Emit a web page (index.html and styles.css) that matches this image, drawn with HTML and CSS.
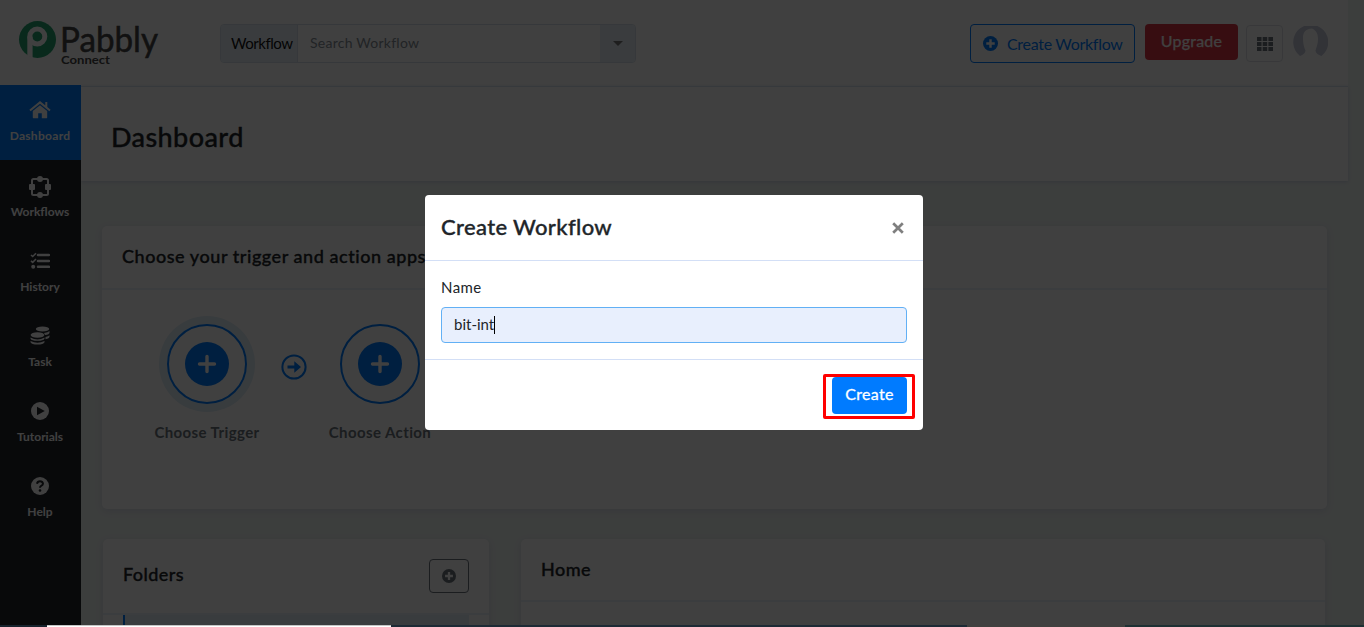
FILE: index.html
```html
<!DOCTYPE html>
<html lang="en">
<head>
<meta charset="utf-8">
<title>Pabbly Connect - Dashboard</title>
<link rel="stylesheet" href="styles.css">
</head>
<body>
<div class="app">
  <header class="topbar">
    <svg class="logo" width="150" height="56" viewBox="0 0 150 56">
      <circle cx="18.500" cy="18.500" r="18.500" fill="#24a46f"/>
      <circle cx="18.300" cy="15.500" r="7.500" fill="none" stroke="#fff" stroke-width="5"/>
      <path d="M8.300 15.500h5.300v21.200l-5.300-2z" fill="#fff"/>
      <text x="41" y="31" class="logo-name" textLength="98" lengthAdjust="spacingAndGlyphs">Pabbly</text>
      <text x="42" y="43" class="logo-sub" textLength="49" lengthAdjust="spacingAndGlyphs">Connect</text>
    </svg>
    <div class="search">
      <span class="search-scope">Workflow</span>
      <span class="search-input">Search Workflow</span>
      <span class="search-toggle"><i class="caret"></i></span>
    </div>
    <div class="actions">
      <button class="btn-create"><svg width="15" height="15" viewBox="0 0 16 16"><circle cx="8" cy="8" r="8" fill="#007bff"/><path d="M8 3.500v9M3.500 8h9" stroke="#fff" stroke-width="2.600"/></svg><span>Create Workflow</span></button>
      <button class="btn-upgrade">Upgrade</button>
      <button class="btn-grid"><svg width="16" height="14" viewBox="0 0 16 14" fill="#6c757d"><path d="M0 0h4.500v4H0zM5.700 0h4.500v4H5.700zM11.400 0H16v4h-4.600zM0 5h4.500v4H0zM5.700 5h4.500v4H5.700zM11.400 5H16v4h-4.600zM0 10h4.500v4H0zM5.700 10h4.500v4H5.700zM11.400 10H16v4h-4.600z"/></svg></button>
      <svg class="avatar" width="35" height="35" viewBox="0 0 35 35"><path d="M7 30A17.500 17.500 0 1 1 28.500 30C25 29 22.500 27 22.500 24.500C23.500 21 25 18 25 13C25 6 22 4 19 2.500C13 3 10 6 10 11C10 18 11 21 12.500 24.500C12.500 27 10 29 7 30Z" fill="#c5c9dc"/></svg>
    </div>
  </header>
  <div class="body">
    <nav class="sidebar">
      <a class="nav-item active"><svg width="22" height="18" viewBox="0 0 22 18"><path d="M11 4.200 3.800 10v6.600q0 .6.600.6h4.800v-5h3.600v5h4.800q.6 0 .6-.6V10z" fill="#fff"/><path d="M1 9.600 11 1.400 21 9.600M17.300 1v5" fill="none" stroke="#fff" stroke-width="2"/></svg><span>Dashboard</span></a>
      <a class="nav-item workflows"><svg width="22" height="22" viewBox="0 0 22 22"><rect x="3" y="3" width="16" height="16" rx="1.500" fill="none" stroke="#fff" stroke-width="2"/><g fill="#fff"><circle cx="11" cy="3" r="3"/><circle cx="11" cy="19" r="3"/><rect x="0" y="8" width="6" height="6" rx="1"/><rect x="16" y="8" width="6" height="6" rx="1"/></g></svg><span>Workflows</span></a>
      <a class="nav-item"><svg width="20" height="18" viewBox="0 0 20 18"><path d="M8 3h11M8 9h11M8 14.800h11" stroke="#fff" stroke-width="2.500" stroke-linecap="round"/><path d="m1 3 1.700 1.500L6 1.200M1 8.800l1.700 1.500L6 7" fill="none" stroke="#fff" stroke-width="1.600"/><circle cx="3.200" cy="14.800" r="2" fill="#fff"/></svg><span>History</span></a>
      <a class="nav-item"><svg width="20" height="19" viewBox="0 0 20 19" fill="#fff"><ellipse cx="12.500" cy="3" rx="6.700" ry="2.600"/><path d="M14 7q4-.5 5.500-2v1.500q0 2-4.500 2.500zM15.500 11q3-.5 4-1.800v1.600q0 1.700-4 2.400z"/><ellipse cx="7.500" cy="9" rx="6.900" ry="2.800"/><path d="M.5 11.500q7 3.800 14 0v1.200q-1 2-7 2t-7-2zM.5 15q7 3.600 14 0v1.200q-1 2.300-7 2.300t-7-2.300z"/></svg><span>Task</span></a>
      <a class="nav-item"><svg width="18" height="18" viewBox="0 0 18 18"><circle cx="9" cy="9" r="9" fill="#fff"/><path d="M6 4.700 13.800 9 6 13.300z" fill="#20242b"/></svg><span>Tutorials</span></a>
      <a class="nav-item"><svg width="18" height="18" viewBox="0 0 18 18"><circle cx="9" cy="9" r="9" fill="#fff"/><path d="M6 6.700Q6.500 4.300 9 4.300T12 6.600Q12 8 10.500 8.700T9 10.800" fill="none" stroke="#20242b" stroke-width="2"/><circle cx="9" cy="13.500" r="1.300" fill="#20242b"/></svg><span>Help</span></a>
    </nav>
    <div class="content">
      <div class="page-head"><h1>Dashboard</h1></div>
      <main class="main">
        <section class="card chooser">
          <h2 class="chooser-title">Choose your trigger and action apps</h2>
          <div class="steps">
            <div class="step"><div class="ring selected"><svg width="44" height="44" viewBox="0 0 44 44"><circle cx="22" cy="22" r="22" fill="#007bff"/><path d="M22 14.500v15M14.500 22h15" stroke="#fff" stroke-width="3.400" stroke-linecap="round"/></svg></div><span>Choose Trigger</span></div>
            <svg class="arrow" width="26" height="26" viewBox="0 0 26 26"><circle cx="13" cy="13" r="11.600" fill="none" stroke="#007bff" stroke-width="2"/><path d="M6.500 11.500h6.800V7.300L20 13l-6.700 5.700v-4.200H6.500z" fill="#007bff"/></svg>
            <div class="step"><div class="ring"><svg width="44" height="44" viewBox="0 0 44 44"><circle cx="22" cy="22" r="22" fill="#007bff"/><path d="M22 14.500v15M14.500 22h15" stroke="#fff" stroke-width="3.400" stroke-linecap="round"/></svg></div><span>Choose Action</span></div>
          </div>
        </section>
        <div class="columns">
          <section class="card folders">
            <div class="folders-head"><h2>Folders</h2><button class="btn-add"><svg width="14" height="14" viewBox="0 0 16 16"><circle cx="8" cy="8" r="8" fill="#6c757d"/><path d="M8 3.500v9M3.500 8h9" stroke="#fff" stroke-width="2.600"/></svg></button></div>
            <div class="folder-row"></div>
          </section>
          <section class="card home"><h2>Home</h2></section>
        </div>
      </main>
    </div>
  </div>
</div>
<div class="overlay">
  <div class="modal">
    <div class="modal-head"><h3>Create Workflow</h3><svg width="12" height="12" viewBox="0 0 12 12"><path d="m1.200 1.200 9.600 9.600M10.800 1.200 1.200 10.800" stroke="#7f7f7f" stroke-width="2.700"/></svg></div>
    <div class="modal-body"><label>Name</label><div class="field"><span>bit-int</span><i class="cursor"></i></div></div>
    <div class="modal-foot"><button class="btn-submit">Create</button><div class="highlight"></div></div>
  </div>
</div>
<div class="bottom-strip"><i class="s1"></i><i class="s2"></i><i class="s3"></i><i class="s4"></i><i class="s5"></i></div>
</body>
</html>
```

FILE: styles.css
```css
* { box-sizing: border-box; }
body { margin: 0; background: #f0f6f3; font-family: Lato, "Open Sans", sans-serif; color: #212529; overflow: hidden; }
h1, h2, h3 { margin: 0; font-weight: 500; -webkit-text-stroke: .35px currentColor; }
button { font-family: inherit; margin: 0; padding: 0; }
svg { display: block; flex: none; }
.app { width: 1364px; height: 627px; overflow: hidden; }
.topbar { width: 1348px; height: 85px; background: #fff; display: flex; align-items: flex-start; padding-left: 19px; }
.logo { margin-top: 21px; overflow: visible; }
.logo-name { font-size: 34px; fill: #444; stroke: #444; stroke-width: .5px; }
.logo-sub { font-size: 12px; font-weight: 700; fill: #444; }
.search { display: flex; margin: 24px 0 0 51px; width: 416px; height: 39px; border: 1px solid #d5e0ea; border-radius: 4px; font-size: 15px; line-height: 36px; overflow: hidden; }
.search-scope { flex: none; width: 77px; padding-left: 10px; background: #e6f0f8; border-right: 1px solid #d5e0ea; color: #111; letter-spacing: -.45px; white-space: nowrap; }
.search-input { flex: 1; padding: 0 0 0 12px; color: #868e96; font-size: 14px; letter-spacing: .25px; }
.search-toggle { width: 35px; background: #e6f0f8; display: flex; justify-content: center; }
.caret { width: 0; height: 0; margin-top: 16px; border: 5px solid transparent; border-top-color: #777; border-bottom: 0; }
.actions { display: flex; margin-left: 334px; align-items: flex-start; }
.btn-create { margin-top: 24px; width: 165px; height: 39px; border: 1px solid #007bff; border-radius: 4px; background: #fff; color: #007bff; font-size: 16px; letter-spacing: -.3px; display: flex; align-items: center; gap: 9px; padding-left: 12px; white-space: nowrap; }
.btn-upgrade { margin: 24px 0 0 10px; width: 93px; height: 36px; border: 0; border-radius: 4px; background: #dc3545; color: #fff; font-size: 16px; letter-spacing: .2px; padding-bottom: 3px; -webkit-text-stroke: .25px #fff; }
.btn-grid { margin: 25px 0 0 8px; width: 37px; height: 37px; border: 1px solid #dde0e6; border-radius: 4px; background: #fff; display: flex; align-items: center; justify-content: center; }
.avatar { margin: 26px 0 0 10px; }
.body { display: flex; height: 542px; }
.sidebar { width: 81px; background: #20242b; position: relative; }
.nav-item { height: 75px; display: flex; flex-direction: column; align-items: center; justify-content: flex-end; padding: 0 1px 15px 0; color: #fff; font-size: 12px; line-height: 16px; font-weight: 700; gap: 9px; }
.nav-item.active { background: #007bff; padding-bottom: 16px; letter-spacing: .3px; }
.nav-item.workflows { gap: 6px; }
.content { flex: 1; background: linear-gradient(#fff, #fff) 0 0 / 1267px 2px no-repeat; }
.page-head { width: 1267px; height: 95px; background: #fff; margin-top: 1px; border-top: 1px solid #d5e3ef; padding: 33px 0 0 30px; box-shadow: 0 1px 4px #cbd3e4; }
.page-head h1 { font-size: 27px; line-height: 34px; letter-spacing: .4px; }
.main { padding: 45px 0 0 21px; }
.card { background: #fff; border-radius: 5px; box-shadow: 0 2px 9px #d8dbe7; }
.chooser { width: 1225px; height: 283px; }
.chooser-title { height: 64px; padding: 19px 0 0 20px; border-bottom: 2px solid #eaf1f9; font-size: 18px; line-height: 22px; letter-spacing: .55px; }
.steps { display: flex; padding: 34px 0 0 45px; }
.step { width: 120px; display: flex; flex-direction: column; align-items: center; color: #6c757d; font-size: 15px; font-weight: 700; line-height: 20px; white-space: nowrap; gap: 18px; letter-spacing: .4px; }
.ring { width: 80px; height: 80px; border: 2px solid #007bff; border-radius: 50%; display: grid; place-items: center; }
.ring.selected { box-shadow: 0 0 0 8px #dfedf7; }
.arrow { margin: 30px 13px 0 14px; }
.columns { display: flex; gap: 32px; padding: 30px 0 0 1px; }
.folders { width: 386px; height: 110px; }
.folders-head { height: 76px; display: flex; justify-content: space-between; padding: 20px 20px 0; border-bottom: 2px solid #eaf1f9; }
.folders h2, .home h2 { font-size: 18px; line-height: 22px; letter-spacing: .45px; }
.folders h2 { margin-top: 4px; }
.btn-add { width: 40px; height: 34px; border: 1px solid #6c757d; border-radius: 4px; background: #fff; display: grid; place-items: center; }
.folder-row { margin: 0 20px; height: 30px; background: #e4f0f6; border-left: 2px solid #007bff; }
.home { width: 804px; height: 110px; }
.home h2 { height: 63px; padding: 19px 20px; border-bottom: 2px solid #eaf1f9; }
.overlay { position: fixed; inset: 0; background: rgba(0, 0, 0, .75); padding: 195px 0 0 425px; }
.modal { width: 498px; height: 235px; background: #fff; border-radius: 4px; }
.modal-head { height: 66px; border-bottom: 1px solid #d3dff6; padding: 0 19px 0 16px; display: flex; align-items: center; justify-content: space-between; }
.modal-head h3 { font-size: 22px; letter-spacing: .35px; padding-bottom: 2px; }
.modal-body { height: 99px; border-bottom: 1px solid #d3dff6; padding: 16px 16px 0; font-size: 15px; }
.modal-body label { display: block; line-height: 20px; letter-spacing: .4px; margin-bottom: 10px; }
.field { height: 36px; border: 1px solid #62b0f5; border-radius: 4px; background: #e8effd; display: flex; align-items: center; padding-left: 12px; }
.field span { padding-bottom: 2px; }
.cursor { width: 1px; height: 18px; background: #000; }
.modal-foot { position: relative; display: flex; justify-content: flex-end; padding: 17px 16px 0; }
.btn-submit { width: 75px; height: 37px; border: 0; border-radius: 4px; background: #007bff; color: #fff; font-size: 16px; letter-spacing: .35px; padding-bottom: 4px; -webkit-text-stroke: .3px #fff; }
.highlight { position: absolute; left: 398px; top: 14px; width: 92px; height: 45px; border: 3px solid #f00; border-radius: 2px; }
.bottom-strip { position: fixed; left: 0; right: 0; bottom: 0; height: 2px; display: flex; }
.s1 { width: 47px; background: #17232d; }
.s2 { width: 344px; background: linear-gradient(#c5c5c5 50%, #fff 50%); }
.s3 { width: 576px; background: #1d2a35; }
.s4 { width: 158px; background: #40403f; }
.s5 { flex: 1; background: #1e3033; }
```
